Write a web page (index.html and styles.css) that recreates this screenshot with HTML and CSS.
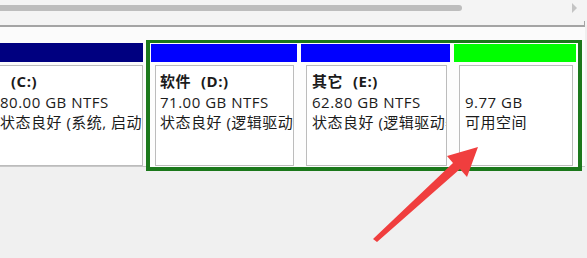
FILE: index.html
```html
<!DOCTYPE html>
<html lang="zh-CN">
<head>
<meta charset="utf-8">
<title>磁盘管理</title>
<link rel="stylesheet" href="styles.css">
</head>
<body>
<div class="top">
  <div class="thumb"></div>
  <div class="next"></div>
</div>
<div class="rule"><div class="tick"></div></div>
<div class="panel">
  <div class="disk">
    <div class="part primary">
      <div class="bar navy"></div>
      <div class="box">
        <div class="name"><span class="drive">(C:)</span></div>
        <div>80.00 GB NTFS</div>
        <div>状态良好 (系统, 启动, 页面文件, 活动, 故障转储, 主分区)</div>
      </div>
    </div>
    <div class="ext">
      <div class="part d">
        <div class="bar blue"></div>
        <div class="box">
          <div class="name">软件<span class="drive">(D:)</span></div>
          <div>71.00 GB NTFS</div>
          <div>状态良好 (逻辑驱动器)</div>
        </div>
      </div>
      <div class="part e">
        <div class="bar blue"></div>
        <div class="box">
          <div class="name">其它<span class="drive">(E:)</span></div>
          <div>62.80 GB NTFS</div>
          <div>状态良好 (逻辑驱动器)</div>
        </div>
      </div>
      <div class="part f">
        <div class="bar lime"></div>
        <div class="box">
          <div class="name">&nbsp;</div>
          <div>9.77 GB</div>
          <div>可用空间</div>
        </div>
      </div>
    </div>
  </div>
</div>
<svg class="pointer" width="587" height="258" viewBox="0 0 587 258" aria-hidden="true">
  <polygon points="478,147 467,177 460,169 377,242 373,239 453,163 447,156" fill="#f03e3e"/>
</svg>
</body>
</html>
```

FILE: styles.css
```css
html, body {
  margin: 0;
  padding: 0;
}
body {
  width: 587px;
  height: 258px;
  overflow: hidden;
  background: #f0f0f0;
  font-family: "Open Sans", "Noto Sans CJK SC", sans-serif;
  font-size: 15px;
  letter-spacing: 0.5px;
  color: #1b1b1b;
  position: relative;
}
.top {
  height: 25px;
  box-sizing: border-box;
  padding-top: 5px;
  display: flex;
  align-items: flex-start;
  background: #f4f4f4;
}
.thumb {
  width: 468px;
  margin-left: -6px;
  height: 6px;
  border-radius: 3px;
  background: #bdbdbd;
}
.next {
  margin-left: auto;
  margin-right: 10px;
  margin-top: -2px;
  width: 0;
  height: 0;
  border-left: 5px solid #c4c4c4;
  border-top: 5px solid transparent;
  border-bottom: 5px solid transparent;
}
.rule {
  height: 2px;
  margin-right: 2px;
  background: #a4a4a4;
  display: flex;
  justify-content: flex-end;
}
.tick {
  width: 1px;
  height: 6px;
  margin-top: -4px;
  background: #a4a4a4;
}
.panel {
  height: 140px;
  box-sizing: border-box;
  padding-top: 13px;
  background: #fbfbfb;
  border-bottom: 1px solid #c8c8c8;
  margin-right: 2px;
}
.disk {
  display: flex;
  align-items: flex-start;
  margin-left: -6px;
}
.part {
  display: flex;
  flex-direction: column;
  gap: 3px;
}
.bar {
  height: 18px;
}
.navy { background: #000080; }
.blue { background: #0000ff; }
.lime { background: #00ff00; }
.primary {
  width: 149px;
  margin-top: 3px;
}
.primary .bar { height: 19px; }
.ext {
  margin-left: 3px;
  width: 436px;
  box-sizing: border-box;
  border: 4px solid #1b781b;
  border-top-width: 3px;
  padding: 1px 0 1px 1px;
  display: flex;
  gap: 4px;
  background: #fdfdfd;
}
.d { width: 146px; }
.e { width: 149px; }
.f { width: 122px; }
.box {
  height: 101px;
  box-sizing: border-box;
  background: #ffffff;
  border: 1px solid #bcbcbc;
  padding: 5px 0 0 4px;
  line-height: 20.5px;
  white-space: nowrap;
  overflow: hidden;
}
.ext .box {
  margin: 0 3px 0 4px;
}
.e .box,
.f .box {
  margin-left: 5px;
  padding-left: 5px;
}
.name {
  font-weight: bold;
}
.drive {
  margin-left: 10px;
}
.primary .box {
  padding-left: 5px;
}
.primary .drive {
  margin-left: 11px;
}
.pointer {
  position: absolute;
  left: 0;
  top: 0;
  pointer-events: none;
}
```
